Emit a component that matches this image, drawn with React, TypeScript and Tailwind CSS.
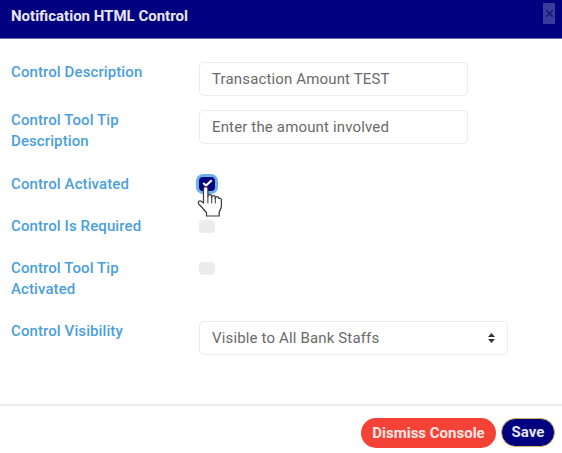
import { X } from 'lucide-react'

const labelClass = 'w-[188px] text-[15px] font-medium tracking-[0.1px] leading-[21px] text-[#4a9fdc]'
const inputClass =
  'h-[34px] rounded-[5px] border border-[#ececec] bg-white px-3 text-[15px] tracking-[0.15px] leading-[32px] text-[#6a6a6a]'

function HandCursor() {
  return (
    <svg
      className="absolute left-[-2px] top-[12px] z-10"
      width="26"
      height="31"
      viewBox="0 0 26 31"
      fill="#ffffff"
      stroke="#3a3a3a"
      strokeWidth="1.200"
      strokeLinejoin="round"
      strokeLinecap="round"
    >
      <path d="M6.500 17V2.800a2.200 2.200 0 0 1 4.400 0V10.500a1.900 1.900 0 0 1 3.800 0V11.500a1.800 1.800 0 0 1 3.600 0V12.500a1.800 1.800 0 0 1 3.600 0c1-.5 2.500 0 2.500 1.500V20c0 2.500-1 4-2.200 6V30H9.500v-3.500L1.800 18c-1.500-2 .5-4 2.500-2.800z" />
      <path d="M10.900 10.500V17M14.700 11.500V17M18.300 12.500V17" fill="none" strokeWidth="1" />
    </svg>
  )
}

function Checkbox({ checked = false }: { checked?: boolean }) {
  if (checked) {
    return (
      <div className="flex h-[14px] w-[16px] items-start justify-center rounded-[4px] bg-[#000080] pt-[2px] ring-[3px] ring-[#6cb2ea]">
        <svg width="11" height="8" viewBox="0 0 11 8" fill="none" stroke="#ffffff" strokeWidth="2.200">
          <path d="M1.200 4L4 6.500L9.800 1.200" />
        </svg>
      </div>
    )
  }
  return <div className="h-[13px] w-[16px] rounded-[4px] bg-[#ececec]" />
}

export default function App() {
  return (
    <div className="flex h-[453px] w-[562px] flex-col overflow-hidden bg-white font-['Roboto',sans-serif]">
      <div className="flex h-[39px] shrink-0 items-start justify-between border-b border-[#6d6db5] bg-[#000080] pl-[11px] pr-[7px]">
        <h1 className="mt-[6px] text-[15px] font-bold leading-[20px] text-[#e8e8f4]">Notification HTML Control</h1>
        <div className="mt-[3px] flex h-[21px] w-[12px] items-center justify-center bg-[#3b3b9c]">
          <X size={11} strokeWidth={3} color="#15156e" />
        </div>
      </div>

      <div className="flex-1 pl-[11px]">
        <div className="flex pt-[23px]">
          <div className={labelClass}>Control Description</div>
          <div className={`${inputClass} w-[269px]`}>Transaction Amount TEST</div>
        </div>

        <div className="flex pt-[14px]">
          <div className={labelClass}>
            Control Tool Tip
            <br />
            Description
          </div>
          <div className={`${inputClass} w-[269px]`}>Enter the amount involved</div>
        </div>

        <div className="flex pt-[22px]">
          <div className={labelClass}>Control Activated</div>
          <div className="relative pt-[3px]">
            <Checkbox checked />
            <HandCursor />
          </div>
        </div>

        <div className="flex pt-[21px]">
          <div className={labelClass}>Control Is Required</div>
          <div className="pt-[4px]">
            <Checkbox />
          </div>
        </div>

        <div className="flex pt-[21px]">
          <div className={labelClass}>
            Control Tool Tip
            <br />
            Activated
          </div>
          <div className="pt-[4px]">
            <Checkbox />
          </div>
        </div>

        <div className="flex pt-[21px]">
          <div className={labelClass}>Control Visibility</div>
          <div className={`${inputClass} flex w-[309px] items-center justify-between pr-[11px]`}>
            <span>Visible to All Bank Staffs</span>
            <svg width="9" height="12" viewBox="0 0 9 12" fill="#333333">
              <path d="M4.500 1L8 5H1zM4.500 11L1 7h7z" />
            </svg>
          </div>
        </div>
      </div>

      <div className="flex h-[49px] shrink-0 items-start justify-end gap-[5px] border-t-2 border-[#ececec] pr-[7px] pt-[12px]">
        <button className="h-[30px] w-[135px] rounded-full bg-[#f44336] text-[15px] font-bold text-[#fde8e6]">
          Dismiss Console
        </button>
        <button className="h-[29px] w-[54px] rounded-full border border-[#d9b45b] bg-[#000080] text-[15px] font-bold text-[#e8e8f4]">
          Save
        </button>
      </div>
    </div>
  )
}
